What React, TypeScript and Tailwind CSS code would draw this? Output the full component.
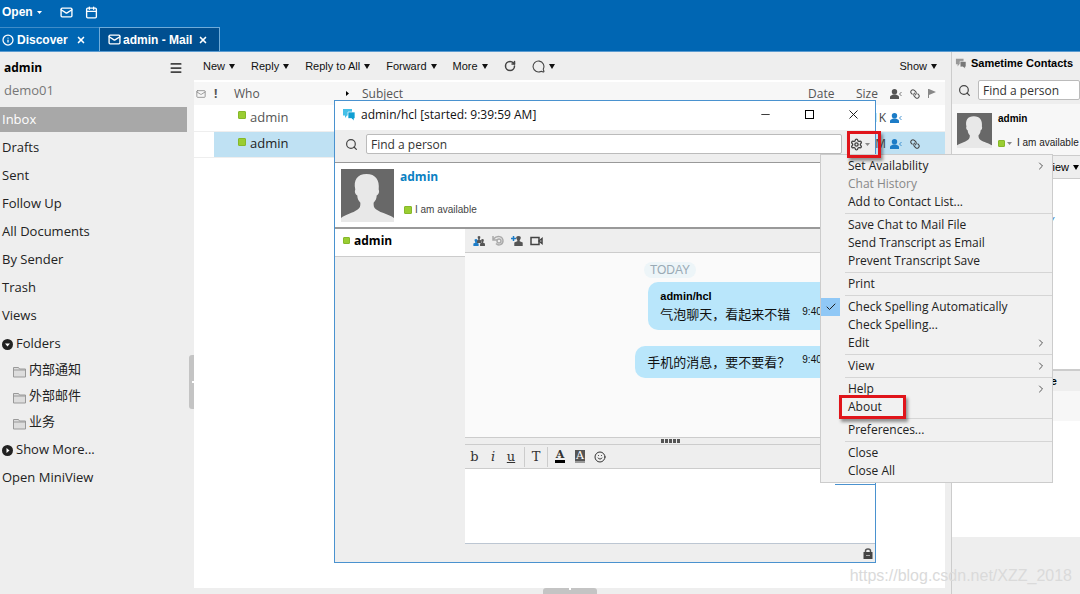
import type { ReactNode } from 'react';
import {
  Calendar, Check, ChevronRight, Info, Link, Mail, Menu, MessageCircle, RotateCw,
  Search, Settings, Smile, X, Minus,
} from 'lucide-react';

const ARIAL = "font-['Liberation_Sans','Noto_Sans_CJK_SC',sans-serif]";

const NAV = ['Drafts', 'Sent', 'Follow Up', 'All Documents', 'By Sender', 'Trash', 'Views'];
const FOLDERS = ['内部通知', '外部邮件', '业务'];

interface MenuEntry { label: string; sub?: boolean; off?: boolean; checked?: boolean; marked?: boolean; }

const MENU: MenuEntry[][] = [
  [{ label: 'Set Availability', sub: true }, { label: 'Chat History', off: true }, { label: 'Add to Contact List...' }],
  [{ label: 'Save Chat to Mail File' }, { label: 'Send Transcript as Email' }, { label: 'Prevent Transcript Save' }],
  [{ label: 'Print' }],
  [{ label: 'Check Spelling Automatically', checked: true }, { label: 'Check Spelling...' }, { label: 'Edit', sub: true }],
  [{ label: 'View', sub: true }],
  [{ label: 'Help', sub: true }, { label: 'About', marked: true }],
  [{ label: 'Preferences...' }],
  [{ label: 'Close' }, { label: 'Close All' }],
];

function Caret({ small = false, className = '' }: { small?: boolean; className?: string }) {
  return (
    <svg viewBox="0 0 6 5" preserveAspectRatio="none" className={`shrink-0 ${small ? 'h-[3px] w-[5px]' : 'h-[5px] w-[6px]'} ${className}`} fill="currentColor">
      <path d="M0 0h6L3 5z" />
    </svg>
  );
}

function Status({ small = false }: { small?: boolean }) {
  return <span className={`block shrink-0 rounded-[1px] border border-[#86b82a] bg-[#9acd32] ${small ? 'size-[7px]' : 'size-2'}`} />;
}

function Avatar({ className }: { className: string }) {
  return (
    <svg viewBox="0 0 52 52" className={`shrink-0 ${className}`}>
      <path fill="#686868" d="M0 0h52v52H0z" />
      <path fill="#e8e8e8" d="M0 52v-4c4-3 12-5 16-8 3-2 3-4 3-7-2-2-3-4-3-7-2-1-3-4-2-6-2-9 2-15 11-15s13 6 12 15c1 2 0 5-2 6 0 3-1 5-3 7 0 3 0 5 3 7 4 3 13 5 17 8v4z" />
    </svg>
  );
}

function Bubbles({ className, back, front }: { className: string; back: string; front: string }) {
  return (
    <svg viewBox="0 0 14 13" className={`shrink-0 ${className}`}>
      <path fill={back} d="M1 1h9v6.500H5L3 10V7.500H1z" />
      <path fill={front} stroke="#fff" strokeWidth=".7" d="M6 4h7v6.500h-1V13l-2.500-2.500H6z" />
    </svg>
  );
}

function PersonIn({ className }: { className: string }) {
  return (
    <svg viewBox="0 0 12 10" className={`h-[10px] w-3 shrink-0 ${className}`} fill="currentColor">
      <circle cx="4.500" cy="2.700" r="2.700" />
      <path d="M0 10V8c0-1.500 2-2 3-2.500h3C7 6 9 6.500 9 8v2z" />
      <path d="M11.500 3 9.500 5l2 2" fill="none" stroke="currentColor" strokeWidth=".8" />
    </svg>
  );
}

function SearchBox({ id }: { id: string }) {
  return (
    <>
      <label htmlFor={id} aria-label="Find a person" className="flex shrink-0">
        <Search size={13} strokeWidth={2.200} className="text-[#444]" />
      </label>
      <input
        id={id}
        placeholder="Find a person"
        className="h-5 min-w-0 flex-1 rounded-[2px] border border-[#bbb] bg-white px-1 text-[12px] leading-[18px] outline-none placeholder:text-[#333]"
      />
    </>
  );
}

function TopBar() {
  return (
    <header className={`flex h-[52px] shrink-0 flex-col justify-between border-b border-[#5b9bd0] bg-[#0066b3] text-[12px] font-bold text-white ${ARIAL}`}>
      <div className="flex h-6 items-center pl-[2px]">
        <button className="flex items-center gap-1">
          Open <Caret small />
        </button>
        <button aria-label="Mail" className="ml-[18px]"><Mail size={13} strokeWidth={2.500} /></button>
        <button aria-label="Calendar" className="ml-3"><Calendar size={13} strokeWidth={2.500} /></button>
      </div>
      <nav className="flex h-6">
        <div className="flex w-[99px] items-center border-t border-[#3f8cc8] pl-[2px]">
          <Info size={12} strokeWidth={2.500} />
          <a href="#discover" className="ml-[3px]">Discover</a>
          <button aria-label="Close Discover" className="ml-2"><X size={10} strokeWidth={4} /></button>
        </div>
        <div className="flex w-[121px] items-center border border-b-0 border-[#6fabd9] bg-[#004f90] pl-2">
          <Mail size={13} strokeWidth={2.500} />
          <a href="#mail" className="ml-[2px]">admin - Mail</a>
          <button aria-label="Close mail" className="ml-[6px]"><X size={10} strokeWidth={4} /></button>
        </div>
      </nav>
    </header>
  );
}

function Sidebar() {
  return (
    <aside className="flex w-[194px] shrink-0 bg-[#eee] text-[13px] text-[#222]">
      <div className="w-[187px]">
        <div className="flex h-8 items-center justify-between pr-1 pl-1">
          <span className="text-[12px] font-bold text-black">admin</span>
          <button aria-label="Menu"><Menu size={14} strokeWidth={3} className="text-[#444]" /></button>
        </div>
        <div className="h-[23px] pl-1 leading-3 text-[#777]">demo01</div>
        <a href="#inbox" className="mb-[2px] flex h-[25px] items-center bg-[#a8a8a8] pl-[2px] text-white">Inbox</a>
        {NAV.map((item) => (
          <a key={item} href="#view" className="flex h-7 items-center pl-[2px]">{item}</a>
        ))}
        <button className="flex h-7 items-center gap-[3px] pl-[2px]">
          <svg viewBox="0 0 11 11" className="size-[11px]"><circle cx="5.500" cy="5.500" r="5.500" fill="#222" /><path fill="#fff" d="M3 4.500h5L5.500 7.500z" /></svg>
          Folders
        </button>
        {FOLDERS.map((name) => (
          <a key={name} href="#folder" className="flex h-[26px] items-center gap-[3px] pb-[3px] pl-[13px]">
            <svg viewBox="0 0 13 12" className="mt-1 h-3 w-[13px]"><path fill="#ddd" stroke="#999" d="M.5 1.500h5l1 1.500h6v8H.5zM.5 4h12" /></svg>
            {name}
          </a>
        ))}
        <button className="flex h-7 items-center gap-[3px] pl-[2px]">
          <svg viewBox="0 0 11 11" className="size-[11px]"><circle cx="5.500" cy="5.500" r="5.500" fill="#222" /><path fill="#fff" d="M4.500 3v5l3-2.500z" /></svg>
          Show More...
        </button>
        <a href="#miniview" className="flex h-7 items-center pl-[2px]">Open MiniView</a>
      </div>
      <div className="flex flex-1 items-center pt-[118px] pl-[2px]">
        <div className="flex h-[54px] w-[5px] items-center justify-end rounded-l-[3px] bg-[#c4c4c4]">
          <span className="size-[2px] bg-white" />
        </div>
      </div>
    </aside>
  );
}

function MailRow({ size, selected = false }: { size: string; selected?: boolean }) {
  const shade = selected ? 'bg-[#bfe1f3]' : '';
  return (
    <tr className="h-[26px] border-b border-[#eee]">
      <td />
      <td colSpan={2} className={`${shade} ${selected ? 'text-[#222]' : 'text-[#555]'}`}>
        <span className="flex items-center gap-1 pl-6"><span className="pb-[5px]"><Status /></span> admin</span>
      </td>
      <td className={shade} />
      <td className={shade} />
      <td className={shade}>
        <span className="flex items-center">
          <span className="mr-1 w-[30px] text-right text-[12px] text-[#444]">{size}</span>
          <PersonIn className="mr-2 text-[#1c7cc7]" />
          {selected && <Link size={10} strokeWidth={2.500} className="rotate-90 text-[#444]" />}
        </span>
      </td>
    </tr>
  );
}

function MailPane() {
  return (
    <section className="flex min-w-0 flex-1 flex-col bg-white">
      <div className={`flex h-7 items-center bg-[#eee] pr-2 pl-[9px] text-[11px] text-[#111] ${ARIAL}`}>
        <div className="flex flex-1 items-center gap-4">
          {['New', 'Reply', 'Reply to All', 'Forward', 'More'].map((label) => (
            <button key={label} className="flex items-center gap-1">{label} <Caret /></button>
          ))}
          <button aria-label="Refresh"><RotateCw size={12} strokeWidth={3} className="text-[#444]" /></button>
          <button aria-label="Chat" className="flex items-center gap-1">
            <MessageCircle size={13} className="-scale-x-100 text-[#444]" /> <Caret />
          </button>
        </div>
        <button className="flex items-center gap-1">Show <Caret /></button>
      </div>
      <table className="w-full table-fixed border-collapse text-left text-[13px]">
        <colgroup>
          <col className="w-[20px]" />
          <col className="w-[20px]" />
          <col className="w-[127px]" />
          <col />
          <col className="w-12" />
          <col className="w-[89px]" />
        </colgroup>
        <thead>
          <tr className="h-6 border-t-2 border-white bg-[#f7f7f7] text-[12px] text-[#555]">
            <th aria-label="Kind"><Mail size={10} className="ml-[2px] text-[#888]" /></th>
            <th className="font-bold">!</th>
            <th className="font-normal">Who</th>
            <th className="font-normal">
              <span className="-ml-4 flex items-center gap-3"><Caret small className="-rotate-90 text-black" /> Subject</span>
            </th>
            <th className="font-normal">Date</th>
            <th className="font-normal">
              <span className="flex items-center gap-2">
                <span className="w-[26px]">Size</span>
                <PersonIn className="text-[#555]" />
                <Link size={10} strokeWidth={2.500} className="rotate-90" />
                <svg viewBox="0 0 8 9" className="h-[9px] w-2" fill="#888"><path d="M0 0h1l7 3-7 3v3H0z" /></svg>
              </span>
            </th>
          </tr>
        </thead>
        <tbody>
          <MailRow size="1K" />
          <MailRow size="1M" selected />
        </tbody>
      </table>
      <div className="mt-auto flex h-[6px] justify-center bg-[#eee]">
        <div className="flex w-[54px] justify-center rounded-t-[3px] bg-[#c4c4c4]"><span className="size-[2px] bg-white" /></div>
      </div>
    </section>
  );
}

function Contacts() {
  return (
    <aside className="ml-[6px] flex w-[129px] shrink-0 flex-col overflow-hidden border-l border-[#ccc] bg-white">
      <h2 className={`flex h-6 shrink-0 items-center gap-1 bg-[#eee] pb-[2px] pl-[3px] text-[11px] font-bold whitespace-nowrap text-black ${ARIAL}`}>
        <Bubbles className="h-[11px] w-3" back="#999" front="#777" /> Sametime Contacts
      </h2>
      <div className="flex h-7 shrink-0 items-center gap-[7px] bg-[#eee] pl-[6px]">
        <SearchBox id="contact-search" />
      </div>
      <div className={`flex h-[51px] shrink-0 gap-[6px] bg-[#f7f7f7] pt-[9px] pl-[5px] text-[10px] whitespace-nowrap ${ARIAL}`}>
        <Avatar className="size-[35px]" />
        <div className="flex flex-col gap-3">
          <b className="leading-3 text-black">admin</b>
          <span className="flex items-center gap-[2px] leading-3 text-[#222]">
            <Status small /><Caret small className="text-[#888]" /> <span className="ml-[3px]">I am available</span>
          </span>
        </div>
      </div>
      <div className={`flex h-6 shrink-0 items-center justify-end border-y border-[#ccc] bg-[#eee] pr-px text-[11px] ${ARIAL}`}>
        <button className="flex items-center gap-1">View <Caret /></button>
      </div>
      <a href="#group" className="mt-8 h-4 shrink-0 pl-[97px] text-[11px] leading-4 text-[#1c7cc7] italic">y</a>
      <h3 className={`mt-[142px] h-[22px] shrink-0 border-t-2 border-[#ccc] bg-[#eee] pl-[23px] text-[11px] leading-5 font-bold text-black ${ARIAL}`}>Day at a Glance</h3>
      <div className="h-[30px] shrink-0 bg-[#f7f7f7]" />
      <div className="mt-[116px] flex-1 bg-[#eee]" />
    </aside>
  );
}

function Bubble({ time, children }: { time: string; children: ReactNode }) {
  return (
    <div className="mr-6 flex rounded-[10px] bg-[#b9e6fb] px-3 py-[6px] text-[13px] leading-5 text-[#111]">
      <div>{children}</div>
      <time className={`mb-1 ml-3 self-end text-[10px] leading-4 ${ARIAL}`}>{time}</time>
    </div>
  );
}

function People({ kind }: { kind: 'group' | 'add' }) {
  const person = 'M0 0c1.700 0 2.200 1.200 1.800 2.600-.2.800-.6 1.200-.8 1.700v.9L3.500 6.500V10h-7V6.500L-1 5.200v-.9c-.2-.5-.6-.9-.8-1.700C-2.200 1.200-1.700 0 0 0z';
  return (
    <svg viewBox="0 0 12 10" className="h-[10px] w-3">
      {kind === 'group' ? (
        <>
          <path d={person} transform="translate(6 0)scale(.7)" fill="#555" />
          <path d={person} transform="translate(9.500 3)scale(.7)" fill="#555" />
          <path d={person} transform="translate(3 3)scale(.75 .7)" fill="#1c7cc7" />
        </>
      ) : (
        <>
          <path d={person} transform="translate(7.500 0)scale(1.200 1)" fill="#555" />
          <path d="M0 2.500h5M2.500 0v5" stroke="#1c7cc7" strokeWidth="1.500" />
        </>
      )}
    </svg>
  );
}

function ChatWindow() {
  return (
    <div role="dialog" aria-label="Chat" className="absolute top-[100px] left-[334px] flex h-[463px] w-[542px] flex-col border border-[#4a92cf] bg-[#eee]">
      <div className="flex h-[29px] shrink-0 items-center bg-white pb-[2px] pl-[7px] text-[12px] text-[#111]">
        <Bubbles className="mr-[5px] h-[13px] w-[14px]" back="#45c0e8" front="#0f9fd3" />
        <span className="flex-1">admin/hcl [started: 9:39:59 AM]</span>
        <button aria-label="Minimize" className="w-11"><Minus size={13} strokeWidth={1.500} className="mx-auto" /></button>
        <button aria-label="Maximize" className="w-11"><span className="mx-auto block size-[9px] border border-black" /></button>
        <button aria-label="Close" className="w-11"><X size={15} strokeWidth={1.500} className="mx-auto" /></button>
      </div>
      <div className="flex h-8 shrink-0 items-center gap-2 pt-1 pr-[5px] pb-2 pl-[10px]">
        <SearchBox id="chat-search" />
        <button aria-label="Settings" className="flex items-center gap-[2px] text-[#444]">
          <Settings size={13} strokeWidth={2.500} /> <Caret small className="text-[#888]" />
        </button>
      </div>
      <div className="flex h-[67px] shrink-0 gap-[6px] border-t border-b-2 border-[#999] bg-white px-[6px] pt-[6px]">
        <Avatar className="size-[53px]" />
        <div className="flex flex-col gap-[17px]">
          <b className="text-[12px] leading-4 text-[#0a7fc2]">admin</b>
          <span className={`flex items-center gap-[3px] pl-1 text-[10px] text-[#444] ${ARIAL}`}><Status /> I am available</span>
        </div>
      </div>
      <div className="flex min-h-0 flex-1">
        <div className="w-[130px] shrink-0">
          <div className="flex h-7 items-center gap-1 border-b border-[#ccc] bg-white pb-1 pl-2 text-[12px] font-bold text-black">
            <Status small /> admin
          </div>
        </div>
        <div className="flex min-w-0 flex-1 flex-col">
          <div className="flex h-6 shrink-0 items-center gap-[7px] border-b border-[#ccc] pl-2 text-[#444]">
            <button aria-label="Invite"><People kind="group" /></button>
            <button aria-label="History">
              <svg viewBox="0 0 12 11" className="h-[11px] w-3" fill="none" stroke="#aaa" strokeWidth="1.500">
                <path d="M1 1v4h4M1.500 4C5 0 11 1 11 6a4 4 0 0 1-7 2.500" /><circle cx="7" cy="6" r="2" />
              </svg>
            </button>
            <button aria-label="Add contact"><People kind="add" /></button>
            <button aria-label="Video">
              <svg viewBox="0 0 13 10" className="h-[10px] w-[13px]" fill="none" stroke="#444" strokeWidth="1.500">
                <path d="M1 1.500h8v7H1z" /><path d="M9 5l3-2.500v5z" />
              </svg>
            </button>
          </div>
          <div className="flex flex-1 flex-col items-end bg-[#fafafa] pt-[9px]">
            <span className={`mb-1 self-center rounded-full bg-[#edf5f8] px-[6px] text-[12px] leading-4 text-[#9aaab5] ${ARIAL}`}>TODAY</span>
            <Bubble time="9:40 AM">
              <b className={`block text-[11px] leading-4 text-black ${ARIAL}`}>admin/hcl</b>
              气泡聊天，看起来不错
            </Bubble>
            <div className="h-4" />
            <Bubble time="9:40 AM">手机的消息，要不要看？</Bubble>
          </div>
          <div className="flex h-2 shrink-0 items-center justify-center border-y border-[#ccc]">
            <svg viewBox="0 0 19 4" className="h-1 w-[19px]"><path stroke="#555" strokeWidth="4" strokeDasharray="3 1" d="M0 2h19" /></svg>
          </div>
          <div className="flex h-6 shrink-0 items-center border-b border-[#ccc] font-['DejaVu_Serif',serif] text-[13px] text-[#333]">
            <button className="w-[19px]">b</button>
            <button className="w-[18px] italic">i</button>
            <button className="w-[18px] underline">u</button>
            <button className="ml-1 h-5 w-6 border-x border-[#ccc]">T</button>
            <button aria-label="Text colour" className="ml-[2px] flex w-5 justify-center"><span className="h-[13px] border-b-[3px] border-black px-px text-[11px] leading-[10px] font-bold">A</span></button>
            <button aria-label="Highlight" className="flex w-5 justify-center"><span className="h-[13px] border-b-2 border-[#999] bg-[#555] px-px text-[11px] leading-[11px] text-white">A</span></button>
            <button aria-label="Emoji" className="flex w-5 justify-center"><Smile size={12} /></button>
          </div>
          <textarea aria-label="Message" className="h-[74px] shrink-0 resize-none bg-white p-1 text-[12px] outline-none" />
          <div className="flex h-[19px] shrink-0 items-center justify-end border-t border-[#bcc6d2] pr-[2px]">
            <svg viewBox="0 0 10 11" className="h-[11px] w-[10px]">
              <path fill="none" stroke="#555" strokeWidth="1.500" d="M2.500 5V3q0-2 2.500-2t2.500 2v2" /><path fill="#444" d="M.5 4h9v7h-9z" /><path fill="#aaa" d="M3 7h4v1H3z" />
            </svg>
          </div>
        </div>
      </div>
      <div className="absolute top-[383px] right-0 h-px w-10 bg-[#4a92cf]" />
    </div>
  );
}

function SettingsMenu() {
  return (
    <div role="menu" className="absolute top-[154px] left-[820px] w-[233px] border border-[#ccc] bg-[#f1f1f1] py-[2px] text-[12px] text-[#222]">
      {MENU.map((group, i) => (
        <div key={i}>
          {i > 0 && <div className="my-[2px] ml-6 h-px bg-[#d5d5d5]" />}
          {group.map((item) => (
            <button
              key={item.label}
              role="menuitem"
              className={`relative flex h-[18px] w-full items-center pr-[5px] ${item.off ? 'text-[#888]' : ''}`}
            >
              <span className={`mr-2 flex h-[18px] w-[19px] items-center justify-center ${item.checked ? 'bg-[#90c8f6]' : ''}`}>
                {item.checked && <Check size={12} />}
              </span>
              <span className="flex-1 text-left">{item.label}</span>
              {item.sub && <ChevronRight size={12} className="text-[#555]" />}
              {item.marked && (
                <span className="absolute -top-[3px] left-[18px] h-6 w-[67px] border-[3px] border-[#e0141a] shadow-[2px_3px_3px_rgba(0,0,0,.4)]" />
              )}
            </button>
          ))}
        </div>
      ))}
    </div>
  );
}

export default function App() {
  return (
    <div className="relative flex min-h-screen flex-col overflow-hidden bg-[#eee] font-['Open_Sans','Noto_Sans_CJK_SC',sans-serif]">
      <TopBar />
      <div className="flex flex-1">
        <Sidebar />
        <MailPane />
        <Contacts />
      </div>
      <ChatWindow />
      <SettingsMenu />
      <div className="absolute top-[131px] left-[847px] h-[27px] w-[34px] border-[3px] border-[#e0141a] shadow-[2px_3px_3px_rgba(0,0,0,.4)]" />
      <div className={`absolute right-2 bottom-2 text-[16px] leading-5 text-[#dadada] ${ARIAL}`}>https://blog.csdn.net/XZZ_2018</div>
    </div>
  );
}
